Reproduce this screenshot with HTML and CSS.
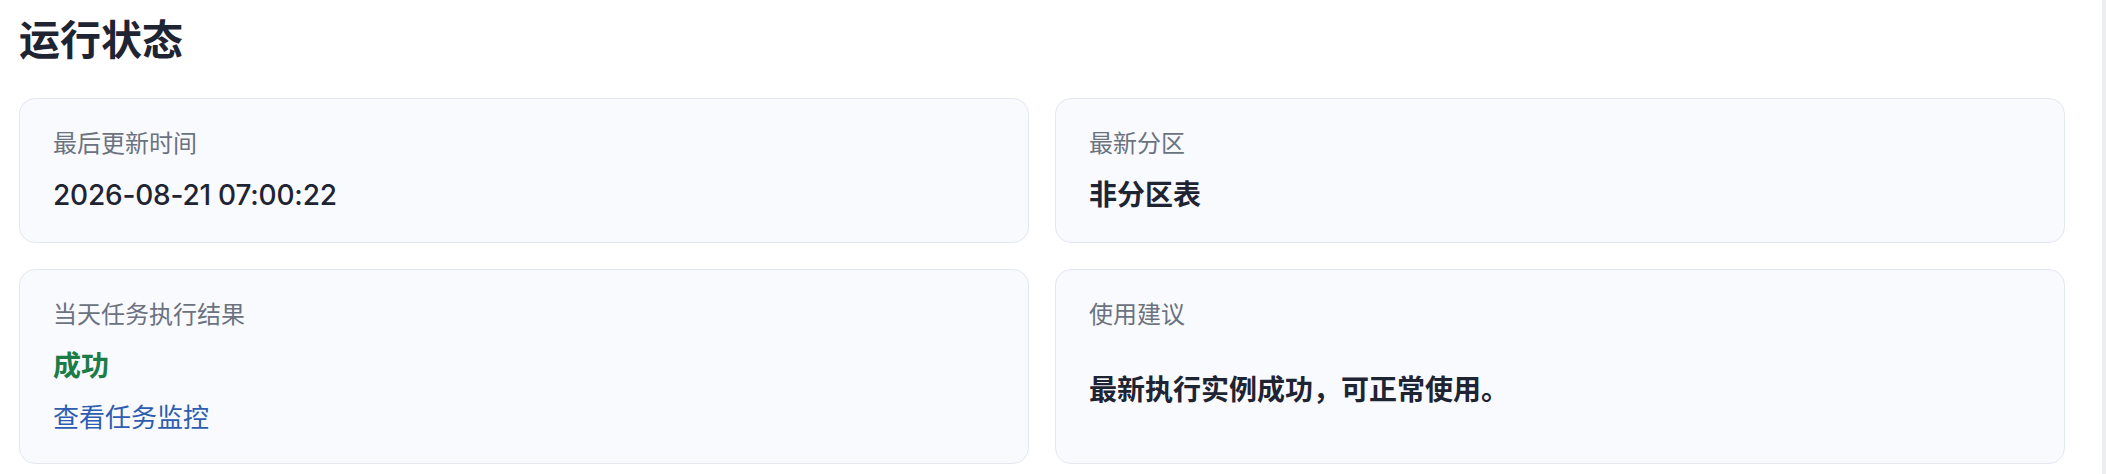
FILE: index.html
```html
<!DOCTYPE html>
<html lang="zh-CN">
<head>
    <meta charset="UTF-8">
    <meta name="viewport" content="width=device-width, initial-scale=1.0">
    <title>运行状态</title>
    <link rel="stylesheet" href="styles.css">
</head>
<body>
    <div class="page">
        <h1 class="section-title">运行状态</h1>

        <div class="status-grid">
            <div class="status-card">
                <div class="status-label">最后更新时间</div>
                <div class="status-value time">2026-08-21 07:00:22</div>
            </div>

            <div class="status-card">
                <div class="status-label">最新分区</div>
                <div class="status-value">非分区表</div>
            </div>

            <div class="status-card">
                <div class="status-label">当天任务执行结果</div>
                <div class="status-value success">成功</div>
                <a class="status-link" href="#">查看任务监控</a>
            </div>

            <div class="status-card">
                <div class="status-label">使用建议</div>
                <div class="status-value advice">最新执行实例成功，可正常使用。</div>
            </div>
        </div>
    </div>
</body>
</html>
```

FILE: styles.css
```css
html, body {
    margin: 0;
    padding: 0;
    background-color: #fff;
}
body {
    font-family: Inter, "Noto Sans CJK SC", sans-serif;
    color: #1f2433;
}
.page {
    padding: 16px 37px 0 19px;
    border-right: 4px solid #eceef2;
    min-height: 474px;
    box-sizing: border-box;
}
.section-title {
    margin: 0 0 33px 0;
    font-size: 41px;
    line-height: 49px;
    font-weight: 700;
    color: #1f2433;
}
.status-grid {
    display: grid;
    grid-template-columns: 1fr 1fr;
    gap: 26px;
}
.status-card {
    display: flex;
    flex-direction: column;
    align-items: flex-start;
    padding: 27px 33px 26px;
    background-color: #f9fafe;
    border: 1px solid #e3e7ef;
    border-radius: 16px;
}
.status-label {
    font-size: 24px;
    line-height: 36px;
    color: #6b7280;
}
.status-value {
    margin-top: 12px;
    font-size: 28px;
    line-height: 42px;
    font-weight: 600;
    color: #1f2433;
}
.status-value.time {
    font-weight: 500;
    letter-spacing: -0.2px;
}
.status-value.success {
    color: #1c7c48;
}
.status-value.advice {
    margin-top: 36px;
}
.status-link {
    margin-top: 12px;
    font-size: 26px;
    line-height: 38px;
    color: #2d5db0;
    text-decoration: none;
}
```
